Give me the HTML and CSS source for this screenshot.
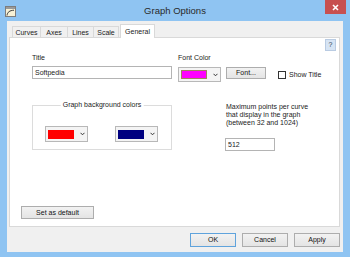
FILE: index.html
```html
<!DOCTYPE html>
<html>
<head>
  <meta name="viewport" content="width=device-width, initial-scale=1.0">
  <title>Graph Options</title>
  <link rel="stylesheet" href="styles.css">
</head>
<body>
  <div class="window">
    <!-- Title bar -->
    <div class="titlebar">
      <svg class="app-icon" width="11" height="11" viewBox="0 0 11 11">
        <rect x="0.5" y="0.5" width="10" height="10" fill="#f7f1d6" stroke="#7d7d7d"/>
        <rect x="1" y="1" width="9" height="2" fill="#9a9a9a"/>
        <path d="M2 9.5 C2.5 6 4.5 4.5 9 4.2" fill="none" stroke="#3a3a3a" stroke-width="1"/>
      </svg>
      <div class="title">Graph Options</div>
      <div class="close">
        <svg width="7" height="7" viewBox="0 0 7 7">
          <path d="M1 1 L6 6 M6 1 L1 6" stroke="#fff" stroke-width="1.6"/>
        </svg>
      </div>
    </div>

    <div class="client">
      <!-- Tabs -->
      <div class="tabs">
        <div class="tab tab-curves">Curves</div>
        <div class="tab tab-axes">Axes</div>
        <div class="tab tab-lines">Lines</div>
        <div class="tab tab-scale">Scale</div>
        <div class="tab tab-general active">General</div>
      </div>

      <div class="panel">
        <div class="help">?</div>

        <div class="row-top">
          <div class="title-field">
            <div class="label">Title</div>
            <div class="textbox">Softpedia</div>
          </div>
          <div class="font-field">
            <div class="label">Font Color</div>
            <div class="font-controls">
              <div class="combo">
                <span class="swatch swatch-magenta"></span>
                <svg class="chev" width="5" height="4" viewBox="0 0 5 4"><path d="M0.5 0.8 L2.5 2.8 L4.5 0.8" fill="none" stroke="#333" stroke-width="1"/></svg>
              </div>
              <div class="button font-btn">Font...</div>
              <div class="check"><span class="box"></span>Show Title</div>
            </div>
          </div>
        </div>

        <div class="row-mid">
          <div class="group">
            <span class="legend">Graph background colors</span>
            <div class="combo">
              <span class="swatch swatch-red"></span>
              <svg class="chev" width="5" height="4" viewBox="0 0 5 4"><path d="M0.5 0.8 L2.5 2.8 L4.5 0.8" fill="none" stroke="#333" stroke-width="1"/></svg>
            </div>
            <div class="combo">
              <span class="swatch swatch-navy"></span>
              <svg class="chev" width="5" height="4" viewBox="0 0 5 4"><path d="M0.5 0.8 L2.5 2.8 L4.5 0.8" fill="none" stroke="#333" stroke-width="1"/></svg>
            </div>
          </div>
          <div class="points">
            <div class="points-text">Maximum points per curve<br>that display in the graph<br>(between 32 and 1024)</div>
            <div class="textbox points-box">512</div>
          </div>
        </div>

        <div class="button default-btn">Set as default</div>
      </div>

      <!-- Dialog buttons -->
      <div class="dialog-buttons">
        <div class="button dlg-btn ok">OK</div>
        <div class="button dlg-btn">Cancel</div>
        <div class="button dlg-btn">Apply</div>
      </div>
    </div>
  </div>
</body>
</html>
```

FILE: styles.css
```css
/* Dialog window, Windows 8 style */
body {
  margin: 0;
  padding: 0;
  font-family: "Liberation Sans", Arial, sans-serif;
  font-size: 7px;
  color: #1b1b1b;
}

.window {
  width: 350px;
  height: 257px;
  box-sizing: border-box;
  padding: 0 7px 5px 7px;
  background-color: #8fc4f2; /* light blue frame */
}

.titlebar {
  display: grid;
  grid-template-columns: 1fr auto 1fr;
  align-items: center;
  height: 21px;
  margin: 0 -7px;
}

.app-icon {
  margin-left: 5px;
  margin-top: 1px;
}

.title {
  font-size: 9.5px;
  color: #2a2a2a;
}

.close {
  justify-self: end;
  align-self: start;
  display: flex;
  align-items: center;
  justify-content: center;
  width: 21px;
  height: 14px;
  margin-right: 4px;
  margin-top: 0;
  background-color: #c75050;
}

.client {
  display: flex;
  flex-direction: column;
  height: 231px;
  padding-top: 3px;
  box-sizing: border-box;
  background-color: #f0f0f0;
}

/* Tabs */
.tabs {
  display: flex;
  align-items: flex-end;
  height: 13px;
  padding-left: 5px;
}

.tab {
  height: 11px;
  line-height: 11px;
  box-sizing: border-box;
  text-align: center;
  border: 1px solid #d9d9d9;
  border-bottom: none;
  background-color: #f0f0f0;
  margin-left: -1px;
}

.tab-curves { width: 29px; margin-left: 0; }
.tab-axes { width: 28px; }
.tab-lines { width: 27px; }
.tab-scale { width: 26px; }

.tab-general {
  width: 35px;
  margin-left: 1px;
}

.tab.active {
  height: 14px;
  line-height: 13px;
  margin-bottom: -1px;
  background-color: #ffffff;
  position: relative;
  z-index: 1;
}

/* Tab page */
.panel {
  display: flex;
  flex-direction: column;
  height: 190px;
  box-sizing: border-box;
  margin: 0 3px 0 2px;
  border: 1px solid #d9d9d9;
  background-color: #ffffff;
}

.help {
  align-self: flex-end;
  width: 11px;
  height: 12px;
  box-sizing: border-box;
  margin: 1px 3px 0 0;
  line-height: 10px;
  text-align: center;
  font-size: 7px;
  color: #2c3e55;
  background-color: #d6e4f4;
  border: 1px solid #b9cbe2;
}

.label {
  height: 8px;
  line-height: 8px;
}

.row-top {
  display: flex;
  margin-top: 3px;
  padding-left: 22px;
}

.title-field .label {
  margin-bottom: 4px;
}

.textbox {
  width: 140px;
  height: 13px;
  box-sizing: border-box;
  padding-left: 2px;
  line-height: 11px;
  border: 1px solid #b4b4b4;
  background-color: #ffffff;
}

.font-field {
  margin-left: 6px;
}

.font-controls {
  display: flex;
  align-items: flex-start;
  margin-top: 5px;
}

.combo {
  display: flex;
  align-items: center;
  width: 43px;
  height: 15px;
  box-sizing: border-box;
  padding-left: 2px;
  border: 1px solid #b8b8b8;
  background-color: #f4f4f4;
}

.swatch {
  display: block;
  width: 26px;
  height: 9px;
  box-sizing: border-box;
}

.swatch-magenta {
  background-color: #ff00ff;
  border: 1px solid #a3805e;
}

.swatch-red { background-color: #ff0000; }
.swatch-navy { background-color: #000080; }

.chev {
  margin-left: 6px;
}

.button {
  box-sizing: border-box;
  text-align: center;
  border: 1px solid #adadad;
  background: linear-gradient(#f2f2f2, #e4e4e4);
  color: #111;
}

.font-btn {
  width: 40px;
  height: 12px;
  line-height: 10px;
  margin-left: 5px;
}

.check {
  display: flex;
  align-items: center;
  height: 15px;
  margin-left: 12px;
}

.check .box {
  width: 8px;
  height: 8px;
  box-sizing: border-box;
  margin-right: 3px;
  border: 1px solid #333;
  background-color: #fff;
}

/* Middle row: group box and max points */
.row-mid {
  display: flex;
  align-items: flex-start;
  margin-top: 21px;
  padding-left: 22px;
}

.group {
  position: relative;
  display: flex;
  gap: 27px;
  width: 140px;
  height: 45px;
  box-sizing: border-box;
  margin-top: 2px;
  padding: 20px 0 0 12px;
  border: 1px solid #dcdcdc;
}

.group .combo {
  height: 16px;
}

.legend {
  position: absolute;
  top: -5px;
  left: 50%;
  transform: translateX(-50%);
  padding: 0 2px;
  line-height: 8px;
  white-space: nowrap;
  background-color: #ffffff;
}

.points {
  margin-left: 54px;
}

.points-text {
  line-height: 8px;
}

.points-box {
  width: 50px;
  margin: 11px 0 0 -1px;
}

.default-btn {
  width: 73px;
  height: 13px;
  line-height: 11px;
  margin: auto 0 7px 11px;
}

/* OK / Cancel / Apply */
.dialog-buttons {
  display: flex;
  justify-content: flex-end;
  gap: 6px;
  margin: 6px 3px 0 0;
}

.dlg-btn {
  width: 46px;
  height: 14px;
  line-height: 12px;
}

.dlg-btn.ok {
  border-color: #5fa3dc;
}
```
